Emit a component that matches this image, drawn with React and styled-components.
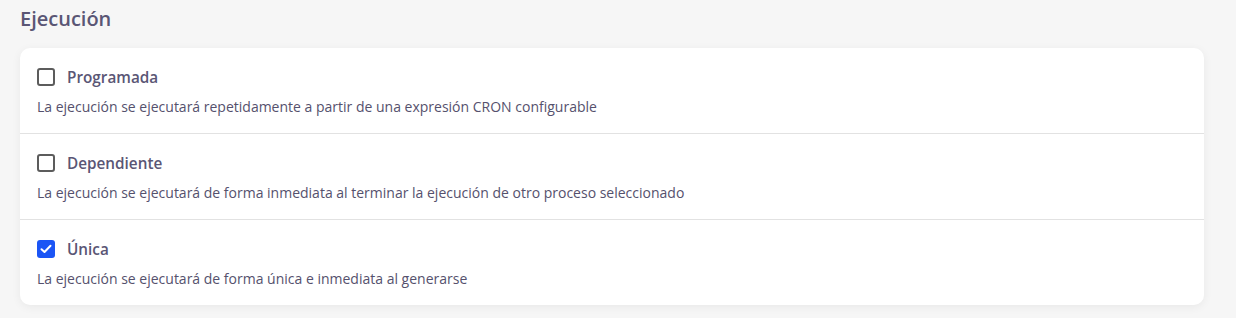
import React from "react";
import styled, { createGlobalStyle } from "styled-components";

const Global = createGlobalStyle`
  html, body { margin: 0; padding: 0; background: #f6f6f6; }
  body { font-family: "Open Sans", "Noto Sans", sans-serif; }
`;

const Page = styled.div`
  padding: 0 32px 14px 20px;
`;

const Title = styled.h2`
  margin: 0;
  height: 48px;
  display: flex;
  align-items: center;
  padding-bottom: 12px;
  box-sizing: border-box;
  font-size: 20px;
  font-weight: 600;
  color: #5a5675;
`;

const Card = styled.div`
  background: #fff;
  border-radius: 10px;
  box-shadow: 0 2px 10px rgba(0, 0, 0, 0.06);
  overflow: hidden;
`;

const Row = styled.div`
  padding: 18px 17px 15px;
  border-top: ${(p) => (p.$first ? "none" : "1px solid #e2e2e2")};
  height: ${(p) => (p.$first ? "85px" : "86px")};
  box-sizing: border-box;
`;

const Header = styled.label`
  display: flex;
  align-items: center;
  gap: 12px;
  height: 22px;
`;

const Box = styled.span`
  width: 18px;
  height: 18px;
  box-sizing: border-box;
  border-radius: 3px;
  border: ${(p) => (p.$checked ? "none" : "2px solid #5c5c5c")};
  background: ${(p) => (p.$checked ? "#1b55f5" : "#fff")};
  display: flex;
  align-items: center;
  justify-content: center;
  flex: none;
`;

const Label = styled.span`
  font-size: 15.3px;
  font-weight: 600;
  color: #5a5675;
`;

const Desc = styled.div`
  margin-top: 9px;
  font-size: 14px;
  line-height: 20px;
  color: #55516d;
`;

const options = [
  { label: "Programada", desc: "La ejecución se ejecutará repetidamente a partir de una expresión CRON configurable", checked: false },
  { label: "Dependiente", desc: "La ejecución se ejecutará de forma inmediata al terminar la ejecución de otro proceso seleccionado", checked: false },
  { label: "Única", desc: "La ejecución se ejecutará de forma única e inmediata al generarse", checked: true },
];

export default function App() {
  return (
    <Page>
      <Global />
      <Title>Ejecución</Title>
      <Card>
        {options.map((o, i) => (
          <Row key={o.label} $first={i === 0}>
            <Header>
              <Box $checked={o.checked}>
                {o.checked && (
                  <svg width="12" height="10" viewBox="0 0 12 10">
                    <path d="M1.5 5.2 L4.5 8 L10.5 1.8" fill="none" stroke="#fff" strokeWidth="2" strokeLinecap="round" strokeLinejoin="round" />
                  </svg>
                )}
              </Box>
              <Label>{o.label}</Label>
            </Header>
            <Desc>{o.desc}</Desc>
          </Row>
        ))}
      </Card>
    </Page>
  );
}
